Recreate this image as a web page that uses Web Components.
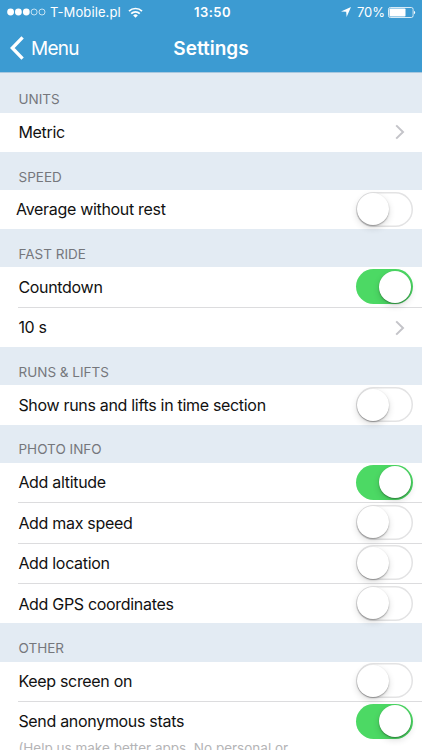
<!DOCTYPE html>
<html lang="en">
<head>
<meta charset="utf-8">
<title>Settings</title>
<style>
  html, body {
    margin: 0;
    height: 750px;
    overflow: hidden;
    background: #fff;
    font-family: Inter, "Liberation Sans", sans-serif;
  }
</style>
</head>
<body>
<settings-screen></settings-screen>

<script>
class StatusBar extends HTMLElement {
  constructor() {
    super();
    this.attachShadow({ mode: 'open' });

    this.shadowRoot.innerHTML = /* html */ `
    <style>
        :host {
            display: grid;
            grid-template-columns: 1fr auto 1fr;
            align-items: center;
            height: 24px;
            padding: 0 6px 0 7px;
            color: #fff;
            font-size: 13px;
            line-height: 24px;
        }
        div {
            display: flex;
            align-items: center;
        }
        svg { display: block; }
        .carrier { margin-left: 4px; letter-spacing: 0.1px; }
        .wifi { margin-left: 7px; }
        .time { font-weight: 600; letter-spacing: 0.5px; padding-left: 2px; }
        .right { justify-content: flex-end; }
        .percent { margin: 0 3px 0 6px; }
    </style>
    <div>
        <svg width="39" height="8" viewBox="0 0 39 8" fill="#fff">
            <circle cx="3.6" cy="4" r="3.4"/>
            <circle cx="11.4" cy="4" r="3.4"/>
            <circle cx="19.3" cy="4" r="3.4"/>
            <circle cx="27.1" cy="4" r="3" fill="none" stroke="#fff" stroke-width=".7"/>
            <circle cx="35" cy="4" r="3" fill="none" stroke="#fff" stroke-width=".7"/>
        </svg>
        <span class="carrier">T-Mobile.pl</span>
        <svg class="wifi" width="15" height="11" viewBox="0 0 15 11" fill="none" stroke="#fff" stroke-width="1.7">
            <path d="M1 4.2a9.2 9.2 0 0 1 13 0"/>
            <path d="M3.2 6.6a6.1 6.1 0 0 1 8.6 0"/>
            <path d="M7.5 10.8 5.2 8.5a3.25 3.25 0 0 1 4.6 0z" fill="#fff" stroke="none"/>
        </svg>
    </div>
    <span class="time">13:50</span>
    <div class="right">
        <svg width="10" height="10" viewBox="0 0 10 10" fill="#fff">
            <path d="M10 0 5.6 10 5.2 4.8 0 4.4z"/>
        </svg>
        <span class="percent">70%</span>
        <svg width="28" height="11" viewBox="0 0 28 11">
            <rect x=".5" y=".5" width="24.6" height="10" rx="1.8" fill="none" stroke="#fff" stroke-width=".8"/>
            <rect x="1.5" y="1.5" width="16" height="8" rx=".8" fill="#fff"/>
            <path d="M26 3.7a2 2 0 0 1 0 3.6z" fill="#fff"/>
        </svg>
    </div>
    `;
  }
}

class NavBar extends HTMLElement {
  constructor() {
    super();
    this.attachShadow({ mode: 'open' });

    this.shadowRoot.innerHTML = /* html */ `
    <style>
        :host {
            display: grid;
            grid-template-columns: 1fr auto 1fr;
            align-items: center;
            height: 48px;
            padding: 0 10px;
            color: #fff;
            font-size: 19px;
        }
        .back {
            display: flex;
            align-items: center;
            gap: 7px;
            letter-spacing: -0.75px;
        }
        .title { font-weight: 600; }
    </style>
    <div class="back">
        <svg width="14" height="24" viewBox="0 0 14 24" fill="none" stroke="#fff" stroke-width="3.3">
            <path d="M12.6 1.3 2.3 12l10.3 10.7"/>
        </svg>
        <span><slot name="back"></slot></span>
    </div>
    <span class="title"><slot></slot></span>
    `;
  }
}

class SettingsSection extends HTMLElement {
  constructor() {
    super();
    this.attachShadow({ mode: 'open' });

    this.shadowRoot.innerHTML = /* html */ `
    <style>
        :host {
            display: block;
            background: #fff;
        }
        header {
            box-sizing: border-box;
            height: var(--header-height, 38.1px);
            padding: 0 18.5px 4.4px;
            display: flex;
            align-items: flex-end;
            background: #e3ebf3;
            color: #75777c;
            font-size: 13.5px;
            line-height: 17px;
        }
    </style>
    <header><span>${this.getAttribute('heading')}</span></header>
    <slot></slot>
    `;
  }
}

class ToggleSwitch extends HTMLElement {
  constructor() {
    super();
    this.attachShadow({ mode: 'open' });

    this.shadowRoot.innerHTML = /* html */ `
    <style>
        :host {
            display: flex;
            align-items: center;
            box-sizing: border-box;
            width: 57px;
            height: 35px;
            margin-bottom: 1px;
            padding: 0 1.5px;
            border-radius: 18px;
            box-shadow: inset 0 0 0 1.5px #e3e3e4;
        }
        :host([on]) {
            justify-content: flex-end;
            background: #4cd964;
            box-shadow: none;
        }
        i {
            width: 32px;
            height: 32px;
            border-radius: 50%;
            background: #fff;
            box-shadow: 0 1px 1.5px rgba(0,0,0,0.34), 0 3px 7px rgba(0,0,0,0.14);
        }
    </style>
    <i></i>
    `;
  }
}

class SettingsRow extends HTMLElement {
  constructor() {
    super();
    this.attachShadow({ mode: 'open' });

    this.shadowRoot.innerHTML = /* html */ `
    <style>
        :host {
            display: block;
            padding-left: 18.4px;
            color: #111;
            font-size: 16px;
            letter-spacing: -0.31px;
        }
        :host([outset]) { padding-left: 16px; }
        .line {
            display: flex;
            align-items: center;
            justify-content: space-between;
            height: 39.35px;
            padding-right: 9.5px;
        }
        :host([divided]) .line { border-bottom: 1px solid #dcdcde; height: 39.45px; }
        .label { margin-bottom: 0.5px; }
        .chevron { margin-right: 7.5px; }
        ::slotted([slot="note"]) {
            display: block;
            margin-top: -1px;
            color: #b4b4b6;
            font-size: 13.5px;
            letter-spacing: 0;
            line-height: 17px;
            white-space: nowrap;
        }
    </style>
    <div class="line">
        <span class="label"><slot></slot></span>
        ${this.control()}
    </div>
    <slot name="note"></slot>
    `;
  }

  control() {
    if (this.hasAttribute('link')) {
      return `<svg class="chevron" width="10" height="16" viewBox="0 0 10 16" fill="none" stroke="#c4c4c9" stroke-width="2">
          <path d="M1.2 1.4 8 8l-6.8 6.6"/>
      </svg>`;
    }
    return `<toggle-switch ${this.hasAttribute('on') ? 'on' : ''}></toggle-switch>`;
  }
}

class SettingsScreen extends HTMLElement {
  constructor() {
    super();
    this.attachShadow({ mode: 'open' });

    this.shadowRoot.innerHTML = /* html */ `
    <style>
        :host {
            display: block;
            width: 422px;
            height: 750px;
            overflow: hidden;
        }
        .top {
            height: 72px;
            background: #3c9bd2;
            border-bottom: 1px solid #a9c8df;
        }
        .first { --header-height: 39.6px; }
    </style>
    <div class="top">
        <status-bar></status-bar>
        <nav-bar><span slot="back">Menu</span>Settings</nav-bar>
    </div>
    <settings-section class="first" heading="UNITS">
        <settings-row link>Metric</settings-row>
    </settings-section>
    <settings-section heading="SPEED">
        <settings-row outset>Average without rest</settings-row>
    </settings-section>
    <settings-section heading="FAST RIDE">
        <settings-row on divided>Countdown</settings-row>
        <settings-row link>10 s</settings-row>
    </settings-section>
    <settings-section heading="RUNS &amp; LIFTS">
        <settings-row>Show runs and lifts in time section</settings-row>
    </settings-section>
    <settings-section heading="PHOTO INFO">
        <settings-row on divided>Add altitude</settings-row>
        <settings-row divided>Add max speed</settings-row>
        <settings-row divided>Add location</settings-row>
        <settings-row>Add GPS coordinates</settings-row>
    </settings-section>
    <settings-section heading="OTHER">
        <settings-row divided>Keep screen on</settings-row>
        <settings-row on>Send anonymous stats
            <span slot="note">(Help us make better apps. No personal or</span>
        </settings-row>
    </settings-section>
    `;
  }
}

customElements.define('status-bar', StatusBar);
customElements.define('nav-bar', NavBar);
customElements.define('toggle-switch', ToggleSwitch);
customElements.define('settings-row', SettingsRow);
customElements.define('settings-section', SettingsSection);
customElements.define('settings-screen', SettingsScreen);
</script>
</body>
</html>
